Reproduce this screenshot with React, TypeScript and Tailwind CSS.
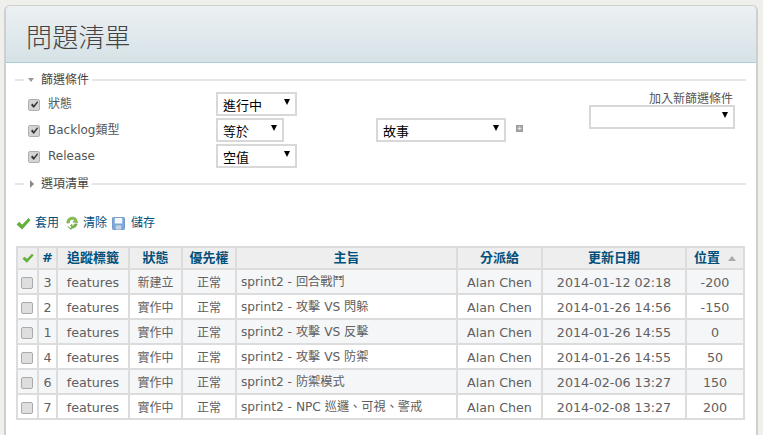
const FONT = "font-['DejaVu_Sans','Noto_Sans_CJK_TC',sans-serif]";

const ROWS = [
  { id: 3, status: "新建立", subject: "sprint2 - 回合戰鬥", date: "2014-01-12 02:18", pos: "-200" },
  { id: 2, status: "實作中", subject: "sprint2 - 攻擊 VS 閃躲", date: "2014-01-26 14:56", pos: "-150" },
  { id: 1, status: "實作中", subject: "sprint2 - 攻擊 VS 反擊", date: "2014-01-26 14:55", pos: "0" },
  { id: 4, status: "實作中", subject: "sprint2 - 攻擊 VS 防禦", date: "2014-01-26 14:55", pos: "50" },
  { id: 6, status: "實作中", subject: "sprint2 - 防禦模式", date: "2014-02-06 13:27", pos: "150" },
  { id: 7, status: "實作中", subject: "sprint2 - NPC 巡邏、可視、警戒", date: "2014-02-08 13:27", pos: "200" },
];

const COLS = "grid-cols-[21px_19px_72px_53px_54px_221px_85px_144px_56px]";

function Tick({ className }: { className: string }) {
  return (
    <svg viewBox="0 0 16 16" className={className}>
      <path d="M1 9 L3.5 6.5 L6.5 9.5 L13.5 2.5 L15 4.5 L6.5 14 Z" fill="#62b336" stroke="#4a9a2a" strokeWidth="0.5" />
    </svg>
  );
}

function Select({ w, children }: { w: string; children?: string }) {
  return (
    <div className={`${w} h-6 shrink-0 bg-white border-2 border-[#d8d8d8] flex items-center justify-between pl-[5px] pr-[5px] text-[13px] leading-none text-black`}>
      <span className="pt-[2px]">{children}</span>
      <span className="w-0 h-0 border-x-[3.5px] border-x-transparent border-t-[6px] border-t-black mb-1" />
    </div>
  );
}

function FilterCheck() {
  return (
    <span className="w-[12px] h-[12px] shrink-0 rounded-[2px] bg-[#d4d4d4] border border-[#b0b0b0] flex items-center justify-center">
      <svg viewBox="0 0 10 10" className="w-[9px] h-[9px]">
        <path d="M1 5.5 L3 4 L4.2 6 L8 1.5 L9 2.5 L4.2 9 Z" fill="#333" />
      </svg>
    </span>
  );
}

function Legend({ open, children }: { open?: boolean; children: string }) {
  return (
    <div className="flex items-center h-4 -ml-px">
      <div className="w-[9px] h-[2px] bg-[#e6e6e6] mr-[4px]" />
      <span className="w-[12px] flex justify-start">
        {open ? (
          <span className="w-0 h-0 border-x-[3.5px] border-x-transparent border-t-[4px] border-t-[#999]" />
        ) : (
          <span className="ml-[2px] w-0 h-0 border-y-[4px] border-y-transparent border-l-[4px] border-l-[#888]" />
        )}
      </span>
      <span className="text-[12px] text-[#444] px-[1px]">{children}</span>
      <div className="flex-1 h-[2px] bg-[#e6e6e6] ml-[2px]" />
    </div>
  );
}

function FilterRow({ label, children }: { label: string; children: React.ReactNode }) {
  return (
    <div className="flex items-center h-[24px] mb-[2px]">
      <span className="w-[20px] flex mt-[1px]"><FilterCheck /></span>
      <span className="w-[168px] text-[12px] text-[#555]">{label}</span>
      {children}
    </div>
  );
}

function HeaderCell({ children, className = "" }: { children?: React.ReactNode; className?: string }) {
  return (
    <div className={`flex items-center justify-center border-r-2 border-[#dcdcdc] last:border-r-0 font-bold text-[#00507c] text-[13px] ${className}`}>
      {children}
    </div>
  );
}

function Cell({ children, className = "" }: { children?: React.ReactNode; className?: string }) {
  return (
    <div className={`flex items-center justify-center border-r-2 border-[#dcdcdc] last:border-r-0 text-[#606060] whitespace-nowrap pt-[2px] ${className}`}>
      {children}
    </div>
  );
}

export default function App() {
  return (
    <div className={`${FONT} w-[763px] h-[435px] overflow-hidden bg-[#efefec] pt-[5px] pl-[4px]`}>
      <div className="w-[754px] h-[430px] bg-white border-r-2 border-l-2 border-t border-[#cfcfcf] rounded-t-[6px] overflow-hidden">
        {/* title */}
        <div className="h-[57px] bg-gradient-to-b from-[#ecf1f3] to-[#d6e2e7] border-b border-[#a9cfdc] flex items-center pl-[20px] pt-[8px]">
          <h1 className="text-[26px] text-[#444] font-light tracking-[0.2px]">問題清單</h1>
        </div>

        <div className="pl-[10px] pr-[10px] pt-[9px]">
          <Legend open>篩選條件</Legend>

          {/* filters */}
          <div className="flex pl-[12px] pt-[4px] h-[88px]">
            <div className="flex-1">
              <FilterRow label="狀態"><Select w="w-[81px]">進行中</Select></FilterRow>
              <FilterRow label="Backlog類型">
                <Select w="w-[68px]">等於</Select>
                <div className="w-[92px]" />
                <Select w="w-[130px]">故事</Select>
                <span className="ml-[10px] mb-1 w-[7px] h-[7px] bg-[#aaa] border border-[#999] flex items-center justify-center text-[6px] leading-none text-white">+</span>
              </FilterRow>
              <FilterRow label="Release"><Select w="w-[81px]">空值</Select></FilterRow>
            </div>
            <div className="w-[146px] mr-[11px] shrink-0 -mt-[4px]">
              <div className="text-[12px] text-[#555] text-right pr-[2px] leading-[12px] mt-[5px]">加入新篩選條件</div>
              <Select w="w-[146px]" />
            </div>
          </div>

          <Legend>選項清單</Legend>

          {/* actions */}
          <div className="flex items-center text-[12px] text-[#00507c] mt-[22px] h-[18px]">
            <Tick className="w-[15px] h-[15px] mr-[4px]" />
            <span>套用</span>
            <svg viewBox="0 0 16 16" className="w-[14px] h-[14px] ml-[6px] mr-[4px]">
              <path d="M13 3 A6.5 6.5 0 0 0 2 8 L5 8 A3.5 3.5 0 0 1 11 5 L9 7 L14.5 7.5 Z" fill="#8cc152" stroke="#5c9a32" strokeWidth="0.6" />
              <path d="M3 12 A6.5 6.5 0 0 0 14 9 L11 9 A3.5 3.5 0 0 1 6 11 L8 9.5 L7 15.5 Z" fill="#7ab648" stroke="#5c9a32" strokeWidth="0.6" />
            </svg>
            <span>清除</span>
            <svg viewBox="0 0 14 14" className="w-[13px] h-[13px] ml-[5px] mr-[6px]">
              <rect x="0.5" y="0.5" width="13" height="13" rx="1" fill="#7ea6d8" stroke="#6b93c4" />
              <rect x="3" y="1" width="8" height="6" fill="#f4f7fb" />
              <rect x="4" y="9" width="6" height="4.5" fill="#c5d3e3" />
            </svg>
            <span>儲存</span>
          </div>

          {/* issue table */}
          <div className="w-[729px] border-2 border-[#dcdcdc] mt-[14px] box-border">
            <div className={`grid ${COLS} h-[22px] bg-[#eeeeee] border-b-2 border-[#dcdcdc]`}>
              <HeaderCell><Tick className="w-[12px] h-[12px]" /></HeaderCell>
              <HeaderCell>#</HeaderCell>
              <HeaderCell>追蹤標籤</HeaderCell>
              <HeaderCell>狀態</HeaderCell>
              <HeaderCell>優先權</HeaderCell>
              <HeaderCell>主旨</HeaderCell>
              <HeaderCell>分派給</HeaderCell>
              <HeaderCell>更新日期</HeaderCell>
              <HeaderCell className="gap-[8px]">
                位置
                <span className="w-0 h-0 border-x-[4px] border-x-transparent border-b-[5px] border-b-[#aaa]" />
              </HeaderCell>
            </div>
            {ROWS.map((r, i) => (
              <div
                key={r.id}
                className={`grid ${COLS} h-[25px] border-b-2 last:border-b-0 last:h-[23px] border-[#dcdcdc] ${i % 2 === 0 ? "bg-[#f5f6f8]" : "bg-white"}`}
              >
                <Cell><span className="w-[12px] h-[12px] -ml-px mt-[1px] rounded-[2px] bg-[#dedede] border border-[#aaa]" /></Cell>
                <Cell className="text-[12.7px]">{r.id}</Cell>
                <Cell className="text-[12.7px]">features</Cell>
                <Cell className="text-[12px] text-[#444]">{r.status}</Cell>
                <Cell className="text-[12px] text-[#444]">正常</Cell>
                <Cell className="text-[12.2px] justify-start pl-[4px]">{r.subject}</Cell>
                <Cell className="text-[12.7px]">Alan Chen</Cell>
                <Cell className="text-[12.7px] text-[#444]">{r.date}</Cell>
                <Cell className="text-[12.7px] text-[#444]">{r.pos}</Cell>
              </div>
            ))}
          </div>
        </div>
      </div>
    </div>
  );
}
